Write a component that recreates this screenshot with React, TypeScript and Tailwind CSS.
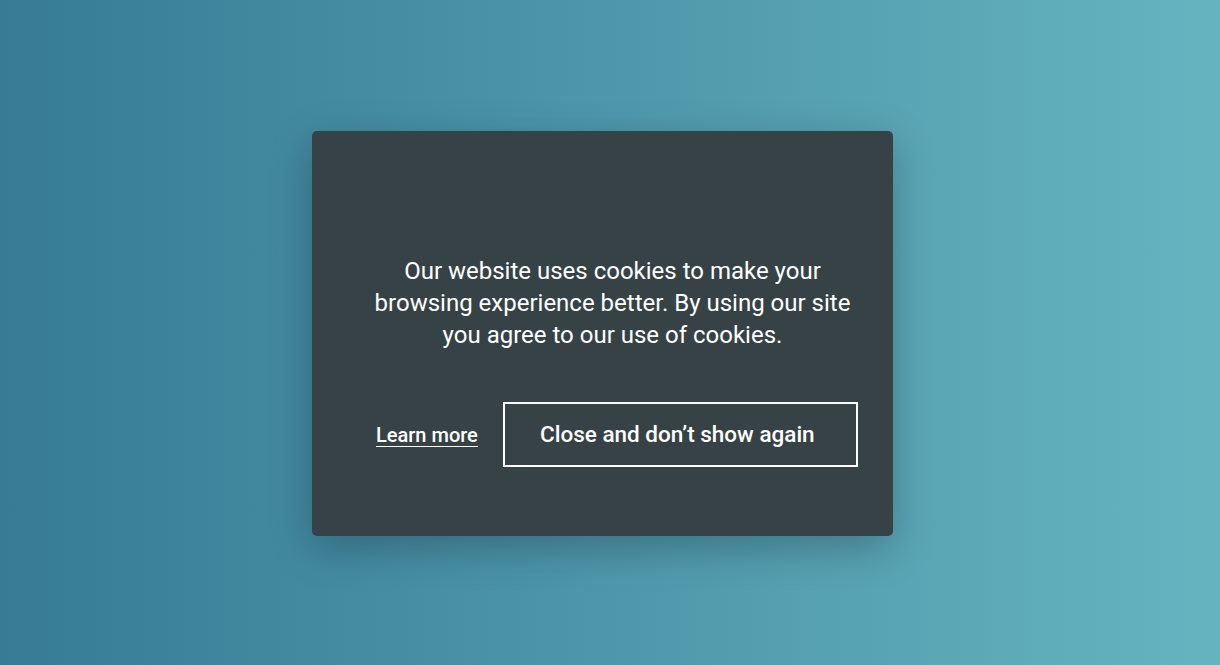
import React from 'react';

const App = () => {
  return (
    <div
      className="w-full h-[665px] flex items-start justify-center bg-gradient-to-r from-[#377b95] to-[#66b4c0]"
      style={{ fontFamily: 'Roboto, "Liberation Sans", sans-serif' }}
    >
      <div className="mt-[131px] ml-[-15px] w-[581px] h-[405px] bg-[#374246] rounded-[5px] shadow-[0_12px_40px_rgba(0,0,0,0.25)] pt-[124px] pl-[58px] pr-[38px]">
        <p className="text-white text-[24px] leading-[32px] text-center">
          Our website uses cookies to make your browsing experience better. By using our site you agree to our use of cookies.
        </p>
        <div className="mt-[51px] ml-[6px] flex items-center gap-[25px]">
          <a href="#" className="whitespace-nowrap text-white text-[20px] font-medium underline underline-offset-[4px] decoration-[1px]">
            Learn more
          </a>
          <button className="shrink-0 w-[355px] h-[65px] border-2 border-white text-white text-[22.5px] font-medium pr-[6px]">
            Close and don’t show again
          </button>
        </div>
      </div>
    </div>
  );
};

export default App;
